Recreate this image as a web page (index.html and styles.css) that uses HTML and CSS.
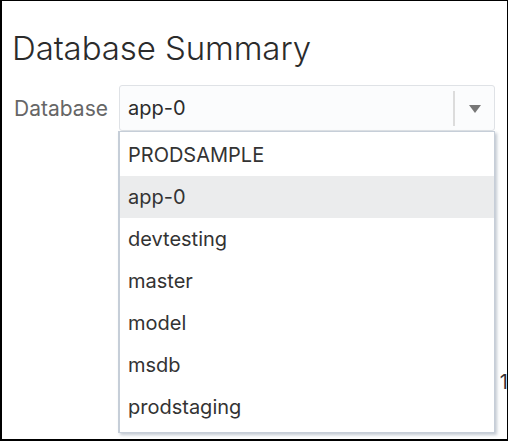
FILE: index.html
```html
<!DOCTYPE html>
<html>
<head>
<meta charset="utf-8">
<link rel="stylesheet" href="styles.css">
</head>
<body>
<div class="frame">
  <div class="page">
    <h1 class="title">Database Summary</h1>
    <div class="form-row">
      <label class="label">Database</label>
      <div class="select-wrap">
        <div class="select">
          <span class="select-value">app-0</span>
          <span class="select-divider"></span>
          <span class="select-arrow">
            <svg width="12" height="8" viewBox="0 0 12 8"><polygon points="0,0 12,0 6,8" fill="#777"/></svg>
          </span>
        </div>
        <ul class="menu">
          <li class="menu-item">PRODSAMPLE</li>
          <li class="menu-item is-active">app-0</li>
          <li class="menu-item">devtesting</li>
          <li class="menu-item">master</li>
          <li class="menu-item">model</li>
          <li class="menu-item">msdb</li>
          <li class="menu-item">prodstaging</li>
        </ul>
      </div>
    </div>
    <div class="summary">
      <div class="summary-row"><span class="summary-value">1</span></div>
    </div>
  </div>
</div>
</body>
</html>
```

FILE: styles.css
```css
html, body {
  margin: 0;
  padding: 0;
  background: #fff;
}

.frame {
  width: 508px;
  height: 441px;
  box-sizing: border-box;
  border-style: solid;
  border-color: #000;
  border-width: 1px 1px 2px 2px;
  overflow: hidden;
  background: #fff;
  font-family: "Inter", "Liberation Sans", sans-serif;
  color: #333;
}

.page {
  padding: 0 11px 0 10px;
}

.title {
  margin: 26px 0 0 0;
  font-size: 33px;
  line-height: 42px;
  font-weight: 300;
  color: #2b2b2b;
  letter-spacing: -0.1px;
}

.form-row {
  display: flex;
  align-items: center;
  gap: 11px;
  margin-top: 16px;
}

.label {
  font-size: 21px;
  color: #666;
  width: 96px;
  text-align: right;
}

.select-wrap {
  position: relative;
  width: 376px;
}

.select {
  box-sizing: border-box;
  height: 46px;
  border: 1px solid #dfe2e6;
  border-radius: 3px;
  background: #fbfcfd;
  display: flex;
  align-items: center;
  padding-left: 8px;
}

.select-value {
  flex: 1;
  font-size: 20px;
  color: #2b2b2b;
}

.select-divider {
  width: 2px;
  height: 35px;
  background: #dcdcdc;
}

.select-arrow {
  width: 39px;
  display: flex;
  justify-content: center;
  align-items: center;
  padding-top: 1px;
}

.select-arrow svg {
  display: block;
}

.menu {
  position: absolute;
  top: 46px;
  left: -1px;
  width: 377px;
  box-sizing: border-box;
  margin: 0;
  padding: 2px 0 4px 0;
  list-style: none;
  background: #fff;
  border: 1px solid #c6ced8;
  border-left-width: 2px;
  box-shadow: 2px 2px 3px rgba(120, 135, 155, 0.45);
  z-index: 2;
}

.menu-item {
  height: 42px;
  line-height: 42px;
  padding-left: 8px;
  font-size: 20px;
  color: #333;
}

.menu-item.is-active {
  background: #ebeced;
}

.summary {
  margin-top: 239px;
  margin-right: -12px;
}

.summary-row {
  display: flex;
  justify-content: flex-end;
  line-height: 24px;
  font-size: 20px;
  color: #333;
}
```
